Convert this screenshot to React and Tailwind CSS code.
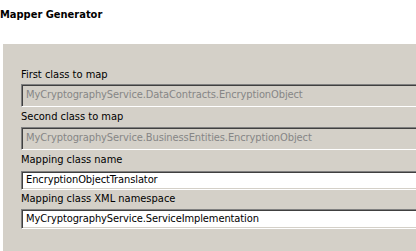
import React from "react";

const fields = [
  { label: "First class to map", value: "MyCryptographyService.DataContracts.EncryptionObject", disabled: true, labelH: "h-[18px]", boxH: "h-[23px]" },
  { label: "Second class to map", value: "MyCryptographyService.BusinessEntities.EncryptionObject", disabled: true, labelH: "h-[20px]", boxH: "h-[23px]" },
  { label: "Mapping class name", value: "EncryptionObjectTranslator", disabled: false, labelH: "h-[21px]", boxH: "h-[19px]" },
  { label: "Mapping class XML namespace", value: "MyCryptographyService.ServiceImplementation", disabled: false, labelH: "h-[19px]", boxH: "h-[20px]" },
];

export default function App() {
  return (
    <div
      className="w-[416px] h-[251px] overflow-hidden bg-white flex flex-col text-[11px] text-black"
      style={{ fontFamily: '"DejaVu Sans Condensed", "Liberation Sans", sans-serif' }}
    >
      {/* Header */}
      <div className="h-[44px] shrink-0 pt-[8px]">
        <span className="block font-bold leading-[13px]">Mapper Generator</span>
      </div>

      {/* Panel */}
      <div className="flex-1 ml-[3px] bg-[#d4d0c8] pt-[22px] pl-[18px] flex flex-col">
        {fields.map((f) => (
          <div key={f.label} className="flex flex-col">
            <div className={`${f.labelH} flex items-center whitespace-nowrap`}>{f.label}</div>
            <div
              className={`${f.boxH} w-[420px] flex items-center pl-[3px] whitespace-nowrap tracking-[-0.1px] border-t border-l border-t-[#808080] border-l-[#808080] border-b border-r border-b-white border-r-white shadow-[inset_1px_1px_0_#404040,inset_-1px_-1px_0_#d4d0c8] ${
                f.disabled ? "bg-[#d4d0c8] text-[#868686]" : "bg-white text-black"
              }`}
            >
              <span className="pl-[1px]">{f.value}</span>
            </div>
          </div>
        ))}
      </div>
    </div>
  );
}
